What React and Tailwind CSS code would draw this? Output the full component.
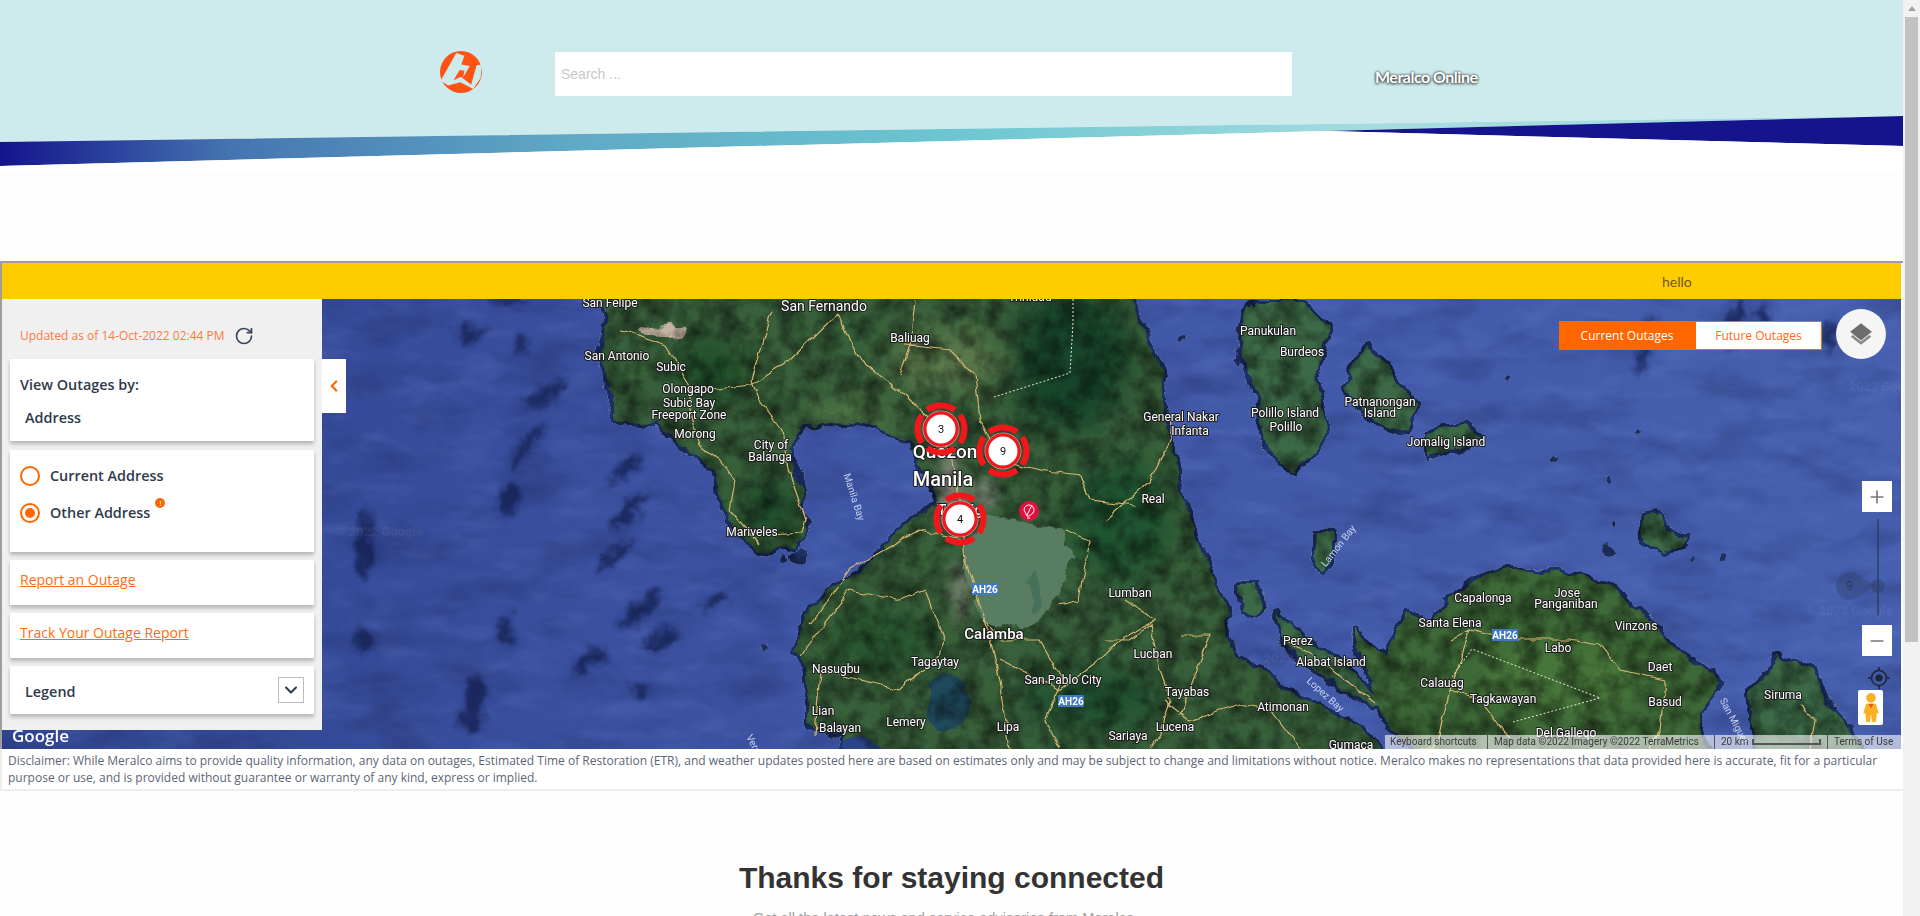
import { ChevronDown, ChevronLeft, Minus, Plus, RotateCw } from 'lucide-react';

const labels = [
  ['San Felipe', 610, 303, 12], ['San Fernando', 824, 306, 14], ['San Antonio', 617, 356, 12], ['Subic', 671, 367, 12],
  ['Olongapo', 688, 389, 12], ['Subic Bay', 689, 403, 12], ['Freeport Zone', 689, 415, 12], ['Morong', 695, 434, 12],
  ['City of', 771, 445, 12], ['Balanga', 770, 457, 12], ['Mariveles', 752, 532, 12], ['Baliuag', 910, 338, 12],
  ['Quezon', 945, 451, 19], ['Manila', 943, 479, 20], ['Taguig', 960, 510, 15], ['Nasugbu', 836, 669, 12],
  ['Tagaytay', 935, 662, 12], ['Calamba', 994, 634, 15], ['San Pablo City', 1063, 680, 12], ['Lian', 823, 711, 12],
  ['Balayan', 840, 728, 12], ['Lemery', 906, 722, 12], ['Lipa', 1008, 727, 12], ['Trinidad', 1030, 297, 12],
  ['General Nakar', 1181, 417, 12], ['Infanta', 1190, 431, 12], ['Panukulan', 1268, 331, 12], ['Burdeos', 1302, 352, 12],
  ['Polillo Island', 1285, 413, 12], ['Polillo', 1286, 427, 12], ['Patnanongan', 1380, 402, 12], ['Island', 1380, 413, 12],
  ['Jomalig Island', 1446, 442, 12], ['Real', 1153, 499, 12], ['Lumban', 1130, 593, 12], ['Lucban', 1153, 654, 12],
  ['Tayabas', 1187, 692, 12], ['Lucena', 1175, 727, 12], ['Sariaya', 1128, 736, 12], ['Atimonan', 1283, 707, 12],
  ['Gumaca', 1351, 745, 12], ['Perez', 1298, 641, 12], ['Alabat Island', 1331, 662, 12], ['Capalonga', 1483, 598, 12],
  ['Jose', 1567, 593, 12], ['Panganiban', 1566, 604, 12], ['Santa Elena', 1450, 623, 12], ['Vinzons', 1636, 626, 12],
  ['Labo', 1558, 648, 12], ['Daet', 1660, 667, 12], ['Calauag', 1442, 683, 12], ['Tagkawayan', 1503, 699, 12],
  ['Basud', 1665, 702, 12], ['Del Gallego', 1566, 733, 12], ['Siruma', 1783, 695, 12],
];

const waterLabels = [
  ['Manila Bay', 851, 498, 72], ['Lamon Bay', 1341, 548, -52], ['Lopez Bay', 1323, 697, 42], ['San Miguel', 1731, 722, 62], ['Verde', 752, 748, 62],
];

const shields = [[985, 589], [1071, 701], [1505, 635]];

// [cx, cy, rx, ry, rotation]
const clouds = [
  [545, 395, 26, 7, -25], [530, 440, 24, 5, -50], [520, 455, 18, 5, -50], [625, 470, 18, 7, -40], [630, 510, 26, 8, -50],
  [615, 555, 24, 6, -45], [640, 610, 26, 8, -40], [365, 545, 8, 34, 0], [365, 640, 12, 12, 0], [510, 500, 10, 16, 20],
  [505, 630, 8, 14, 10], [475, 695, 10, 20, 5], [590, 660, 20, 8, -30], [660, 640, 20, 8, -25], [715, 600, 16, 6, -30],
  [640, 690, 10, 6, 0], [1735, 325, 8, 28, 15], [1645, 345, 6, 30, 10], [1760, 320, 8, 16, 25], [1830, 335, 5, 16, 0],
  [470, 335, 14, 8, -20], [510, 300, 18, 5, 0], [520, 345, 6, 10, 0], [470, 720, 14, 10, 0],
];

const roads = [
  'M772 310 L751 380 L760 400 L782 430 L788 470 L806 520 L802 533 L770 535',
  'M836 315 L790 360 L750 385 L710 390',
  'M836 315 L860 360 L905 395 L930 420 L950 450 L960 500 L965 560 L985 620 L1000 680 L1010 749',
  'M915 300 L910 345 L900 375 M905 345 L950 350 L975 375 L980 420 L1000 460 L1040 470 L1080 475 L1090 500 L1135 505',
  'M620 330 L640 335 L665 345 L690 385 L690 410 L700 445 L720 460 L735 480 L730 510 L760 545',
  'M810 625 L850 570 L920 530 L965 540',
  'M800 655 L850 590 L900 600 L925 590 L945 640 L935 660 L900 690 L860 680 L820 670 L815 735',
  'M985 620 L1000 640 L1040 640 L1063 680 L1045 720 L1060 749',
  'M1065 530 L1090 540 L1080 600 L1060 605',
  'M1000 660 L1060 690 L1100 660 L1120 640 L1155 620 L1125 600',
  'M1105 520 L1150 480 L1170 440 L1172 420',
  'M1105 640 L1130 640 L1150 625 L1160 670 L1170 700 L1160 735 L1150 749',
  'M1165 700 L1190 720 L1240 705 L1270 710 L1300 749',
  'M1180 635 L1210 635 L1180 715',
  'M1285 640 L1320 660 L1375 703',
  'M1450 640 L1470 630 L1510 640 L1570 640 L1600 645 L1620 670 L1665 680 L1660 730 L1650 749',
  'M1470 630 L1450 690 L1435 749 L1420 749',
  'M1450 690 L1480 700 L1510 740',
  'M1800 705 L1815 720 L1810 749',
];

const markers = [[941, 429, '3'], [1003, 451, '9'], [960, 519, '4']];

const MAIN_LAND =
  'M601 299 L606 323 L601 350 L609 393 L616 420 L657 425 L688 453 L718 477 L723 507 L734 530 L759 550 L795 547 L805 523 L802 490 L790 450 L802 423 L825 423 L876 425 L912 443 L932 487 L938 507 L912 517 L897 533 L861 573 L831 590 L810 610 L792 650 L805 660 L810 690 L810 723 L841 737 L846 755 L1386 755 L1365 727 L1304 700 L1248 660 L1222 637 L1228 610 L1202 553 L1182 497 L1171 447 L1161 373 L1131 295 L601 295 Z';
const BICOL =
  'M1355 630 L1386 657 L1406 610 L1432 623 L1447 600 L1488 570 L1539 570 L1590 577 L1641 610 L1677 650 L1722 683 L1697 717 L1712 755 L1416 755 L1381 717 L1370 677 L1355 643 Z';
const islands = [
  'M1248 303 L1304 303 L1330 327 L1314 377 L1330 430 L1294 473 L1268 450 L1253 383 L1238 353 Z',
  'M1365 343 L1391 377 L1416 403 L1406 433 L1365 417 L1345 390 Z',
  'M1427 433 L1467 423 L1483 443 L1427 455 Z',
  'M1276 612 L1304 637 L1355 673 L1381 703 L1370 707 L1324 677 L1284 643 Z',
  'M1779 653 L1814 673 L1824 700 L1845 723 L1865 755 L1758 755 L1748 693 L1768 673 Z',
  'M1640 515 L1660 512 L1668 530 L1686 540 L1665 555 L1640 535 Z',
  'M1318 532 L1330 532 L1332 560 L1322 572 L1316 556 Z',
  'M1240 585 L1260 585 L1262 610 L1244 612 Z',
];

// Satellite map base: land, shadows, roads and place names
const MapCanvas = () => (
  <svg viewBox="2 299 1899 450" className="block h-[450px] w-[1899px] font-['Roboto']">
    <defs>
      <linearGradient id="sea" x1="0" x2="1" y1="0" y2="0">
        <stop offset="0" stopColor="#2f438f" />
        <stop offset="0.45" stopColor="#3f55a5" />
        <stop offset="1" stopColor="#465fae" />
      </linearGradient>
      <filter id="b6" colorInterpolationFilters="sRGB"><feGaussianBlur stdDeviation="7" /></filter>
      <filter id="b12" colorInterpolationFilters="sRGB"><feGaussianBlur stdDeviation="14" /></filter>
      <filter id="seaNoise" filterUnits="userSpaceOnUse" x="2" y="299" width="1899" height="450" colorInterpolationFilters="sRGB">
        <feTurbulence type="fractalNoise" baseFrequency="0.014 0.03" numOctaves="4" seed="8" />
        <feColorMatrix values="0 0 0 0 0.1  0 0 0 0 0.14  0 0 0 0 0.34  2.2 0 0 0 -1.05" />
      </filter>
      <filter id="seaLight" filterUnits="userSpaceOnUse" x="2" y="299" width="1899" height="450" colorInterpolationFilters="sRGB">
        <feTurbulence type="fractalNoise" baseFrequency="0.02 0.05" numOctaves="3" seed="21" />
        <feColorMatrix values="0 0 0 0 0.5  0 0 0 0 0.6  0 0 0 0 0.9  1.8 0 0 0 -0.85" />
      </filter>
      <filter id="cloud" filterUnits="userSpaceOnUse" x="2" y="299" width="1899" height="450" colorInterpolationFilters="sRGB">
        <feTurbulence type="fractalNoise" baseFrequency="0.06" numOctaves="3" seed="5" result="n" />
        <feGaussianBlur in="SourceGraphic" stdDeviation="3.5" result="g" />
        <feDisplacementMap in="g" in2="n" scale="18" xChannelSelector="R" yChannelSelector="G" />
      </filter>
      <filter id="terrain" filterUnits="userSpaceOnUse" x="2" y="299" width="1899" height="450" colorInterpolationFilters="sRGB">
        <feTurbulence type="fractalNoise" baseFrequency="0.04" numOctaves="4" seed="3" result="d" />
        <feDisplacementMap in="SourceGraphic" in2="d" scale="16" xChannelSelector="R" yChannelSelector="G" result="land" />
        <feTurbulence type="fractalNoise" baseFrequency="0.05" numOctaves="5" seed="12" />
        <feColorMatrix values="1.05 0 0 0 0.3  1.05 0 0 0 0.3  1.05 0 0 0 0.3  0 0 0 0 1" result="tex" />
        <feComposite in="tex" in2="land" operator="in" result="texIn" />
        <feBlend in="texIn" in2="land" mode="multiply" />
      </filter>
      <filter id="shape" filterUnits="userSpaceOnUse" x="2" y="299" width="1899" height="450">
        <feTurbulence type="fractalNoise" baseFrequency="0.04" numOctaves="4" seed="3" result="d" />
        <feDisplacementMap in="SourceGraphic" in2="d" scale="16" xChannelSelector="R" yChannelSelector="G" />
      </filter>
      <filter id="wobble" filterUnits="userSpaceOnUse" x="2" y="299" width="1899" height="450">
        <feTurbulence type="fractalNoise" baseFrequency="0.07" numOctaves="2" seed="9" result="w" />
        <feDisplacementMap in="SourceGraphic" in2="w" scale="7" xChannelSelector="R" yChannelSelector="G" />
      </filter>
      <clipPath id="land"><path d={MAIN_LAND} /><path d={BICOL} /></clipPath>
    </defs>

    <rect x="2" y="299" width="1899" height="450" fill="url(#sea)" />
    <rect x="2" y="299" width="1899" height="450" filter="url(#seaLight)" opacity="0.22" />
    <rect x="2" y="299" width="1899" height="450" filter="url(#seaNoise)" opacity="0.35" />
    <g filter="url(#cloud)" fill="#101b48" opacity="0.72">
      {clouds.map(([x, y, rx, ry, rot]) => (
        <ellipse key={`${x}-${y}`} cx={x} cy={y} rx={rx} ry={ry} transform={`rotate(${rot} ${x} ${y})`} />
      ))}
    </g>

    {/* everything in this group gets the same rough coast and ground texture */}
    <g filter="url(#terrain)">
      <g fill="#1b2f68" stroke="#1b2f68" strokeWidth="7" strokeLinejoin="round">
        <path d={MAIN_LAND} /><path d={BICOL} />
        {islands.map((d) => <path key={d} d={d} />)}
      </g>
      <path d={MAIN_LAND} fill="#38603a" />
      <path d={BICOL} fill="#3d6837" />
      {islands.map((d) => <path key={d} d={d} fill="#3c6a46" />)}
      <g clipPath="url(#land)">
        <g filter="url(#b12)">
          <ellipse cx="1070" cy="360" rx="60" ry="70" fill="#17452b" />
          <ellipse cx="710" cy="370" rx="40" ry="30" fill="#21502a" />
          <ellipse cx="770" cy="510" rx="24" ry="30" fill="#1c4a2a" />
          <ellipse cx="950" cy="360" rx="60" ry="30" fill="#5b7a4c" />
          <ellipse cx="850" cy="420" rx="40" ry="20" fill="#527848" />
          <ellipse cx="880" cy="640" rx="50" ry="30" fill="#27562e" />
          <ellipse cx="1090" cy="700" rx="70" ry="30" fill="#205230" />
          <ellipse cx="1120" cy="520" rx="50" ry="60" fill="#1f5430" />
          <ellipse cx="1560" cy="680" rx="80" ry="40" fill="#47763a" />
        </g>
        <g filter="url(#b6)">
          <ellipse cx="950" cy="490" rx="14" ry="40" fill="#7d8276" />
          <ellipse cx="985" cy="495" rx="14" ry="14" fill="#7c8678" />
          <ellipse cx="960" cy="590" rx="10" ry="30" fill="#6f7d68" />
        </g>
      </g>
      <ellipse cx="665" cy="330" rx="24" ry="5" fill="#c4b3a0" />
      <ellipse cx="948" cy="702" rx="20" ry="28" fill="#1f4a5c" />
      <ellipse cx="861" cy="750" rx="20" ry="12" fill="#2a4688" />
      <g fill="#1f3268">
        <circle cx="1509" cy="380" r="3" /><circle cx="1640" cy="432" r="3" /><circle cx="1554" cy="462" r="3" />
        <circle cx="1608" cy="479" r="3" /><circle cx="1616" cy="523" r="3" /><circle cx="1608" cy="552" r="6" />
        <circle cx="1725" cy="561" r="4" /><circle cx="1693" cy="561" r="3" /><circle cx="1181" cy="340" r="3" />
        <circle cx="785" cy="560" r="4" /><circle cx="800" cy="558" r="9" /><circle cx="763" cy="650" r="3" />
      </g>
    </g>

    {/* Laguna de Bay sits smooth on top of the noise */}
    <g filter="url(#shape)">
      <path
        d="M968 540 L984 517 L1024 523 L1065 530 L1073 557 L1060 593 L1024 630 L984 623 L968 583 L963 557 Z"
        fill="#587d63"
      />
      <ellipse cx="1034" cy="590" rx="5" ry="22" fill="#47705a" />
    </g>

    <path
      d={roads.join(' ')}
      fill="none"
      stroke="#d5b46f"
      strokeWidth="1.2"
      strokeLinejoin="round"
      filter="url(#wobble)"
    />
    <path
      d="M1073 299 L1073 323 L1070 373 L994 397 M1452 677 L1472 649 L1600 698 L1513 722"
      fill="none"
      stroke="#e6e6d8"
      strokeWidth="1"
      strokeDasharray="2 2"
    />

    {waterLabels.map(([name, x, y, rot]) => (
      <text
        key={name}
        x={x}
        y={y}
        transform={`rotate(${rot} ${x} ${y})`}
        textAnchor="middle"
        fontSize="10"
        fill="#c6d2ee"
      >
        {name}
      </text>
    ))}

    <g fill="#fff" opacity="0.05" fontSize="13" fontWeight="700">
      <text x="1835" y="391">© 2022 Google</text>
      <text x="1805" y="615">© 2022 Google</text>
      <text x="1250" y="663">© 2022 Google</text>
      <text x="335" y="536">© 2022 Google</text>
    </g>

    {labels.map(([name, x, y, size]) => (
      <text
        key={name}
        x={x}
        y={y + size * 0.36}
        textAnchor="middle"
        fontSize={size}
        fontWeight={size > 14 ? 500 : 400}
        fill="#fff"
        stroke="#1c1c1c"
        strokeWidth="2"
        paintOrder="stroke"
        strokeLinejoin="round"
      >
        {name}
      </text>
    ))}
    {shields.map(([x, y]) => (
      <g key={x}>
        <rect x={x - 13} y={y - 6} width="26" height="12" rx="1" fill="#3f78c4" />
        <text x={x} y={y + 3.5} textAnchor="middle" fontSize="10" fontWeight="700" fill="#fff">AH26</text>
      </g>
    ))}

    {markers.map(([x, y, n]) => (
      <g key={n}>
        <circle
          cx={x}
          cy={y}
          r="23.5"
          fill="none"
          stroke="#f5161c"
          strokeWidth="6"
          pathLength="100"
          strokeDasharray="20 5"
          strokeDashoffset="10"
          transform={`rotate(-90 ${x} ${y})`}
        />
        <circle cx={x} cy={y} r="18" fill="none" stroke="#f7858a" strokeWidth="1" />
        <circle cx={x} cy={y} r="16" fill="#fff" stroke="#f5161c" strokeWidth="3" />
        <text x={x} y={y + 4} textAnchor="middle" fontSize="11" fill="#111">{n}</text>
      </g>
    ))}
    <circle cx="1029" cy="511" r="10" fill="#e1103f" />
    <path d="M1024 510 a5 5 0 1 1 9 3 l-4 3 h-2 z M1032 505 L1027 515 M1027 518 h3" fill="none" stroke="#fff" strokeWidth="1" />
    <text x="12" y="742" fontSize="17" fontWeight="600" fill="#fff" className="font-['Open_Sans']">Google</text>
  </svg>
);

const Sidebar = () => (
  <aside className="absolute left-0 top-0 h-[431px] w-[320px] bg-[#f0f0f0] px-2 font-['Open_Sans'] text-[14.4px] font-semibold text-[#2f3a4a]">
    <div className="flex h-[60px] items-center pl-[10px] pt-[14px]">
      <span className="text-xs font-normal text-[#ff7a3c]">Updated as of 14-Oct-2022 02:44 PM</span>
      <RotateCw className="ml-[9px] h-[20px] w-[20px] text-[#3c4858]" strokeWidth={2} />
    </div>
    <div className="h-[82px] bg-white pl-[10px] pt-[16px] shadow-[0_3px_4px_rgba(0,0,0,0.25)]">
      <p className="leading-[20px]">View Outages by:</p>
      <p className="mt-[13px] pl-[5px] leading-[20px]">Address</p>
    </div>
    <div className="mt-[9px] h-[102px] bg-white pl-[10px] pt-[15px] shadow-[0_3px_4px_rgba(0,0,0,0.25)]">
      <div className="flex items-center gap-[10px] leading-[20px]">
        <span className="h-5 w-5 rounded-full border-2 border-[#ff6600]" />
        <span className="pt-px">Current Address</span>
      </div>
      <div className="mt-[16px] flex items-center gap-[10px] leading-[20px]">
        <span className="flex h-5 w-5 items-center justify-center rounded-full border-2 border-[#ff6600]">
          <span className="h-[10px] w-[10px] rounded-full bg-[#ff6600]" />
        </span>
        <span className="relative pt-px">
          Other Address
          <span className="absolute right-[-15px] top-[-4px] flex h-[10px] w-[10px] items-center justify-center rounded-full bg-[#ff6600] text-[7px] leading-none text-white">!</span>
        </span>
      </div>
    </div>
    <div className="mt-2 h-[45px] bg-white pl-[10px] pt-[10px] text-sm font-normal leading-[20px] text-[#ff6a13] underline shadow-[0_3px_4px_rgba(0,0,0,0.25)]">
      Report an Outage
    </div>
    <div className="mt-2 h-[45px] bg-white pl-[10px] pt-[10px] text-sm font-normal leading-[20px] text-[#ff6a13] underline shadow-[0_3px_4px_rgba(0,0,0,0.25)]">
      Track Your Outage Report
    </div>
    <div className="mt-2 flex h-[48px] items-center justify-between bg-white pl-[15px] pr-[10px] shadow-[0_3px_4px_rgba(0,0,0,0.25)]">
      <span className="pt-[3px]">Legend</span>
      <span className="flex h-[26px] w-[26px] items-center justify-center border border-[#bbb]">
        <ChevronDown className="h-5 w-5 text-[#2f3a4a]" strokeWidth={2.5} />
      </span>
    </div>
  </aside>
);

const MapControls = () => (
  <>
    <div className="absolute left-[320px] top-[60px] flex h-[54px] w-[24px] items-center justify-center bg-white">
      <ChevronLeft className="h-[18px] w-[18px] text-[#ff6600]" strokeWidth={3} />
    </div>

    <div className="absolute left-[1557px] top-[22px] flex h-[29px] font-['Open_Sans'] text-xs">
      <span className="flex w-[136px] items-center justify-center bg-[#ff6600] text-white">Current Outages</span>
      <span className="flex w-[127px] items-center justify-center border border-[#ff6600] bg-white text-[#ff6a13]">Future Outages</span>
    </div>

    <div className="absolute left-[1834px] top-[10px] flex h-[50px] w-[50px] items-center justify-center rounded-full bg-[#f5f5f5]">
      <svg viewBox="0 0 24 24" className="h-[26px] w-[26px]">
        <path d="M12 2 L22 10 L12 18 L2 10 Z" fill="#6d6d6d" />
        <path d="M2.5 14.5 L12 22 L21.5 14.5 L19.5 13 L12 19 L4.5 13 Z" fill="#8a8a8a" />
      </svg>
    </div>

    <div className="absolute left-[1860px] top-[182px] flex h-[31px] w-[30px] items-center justify-center bg-white">
      <Plus className="h-5 w-5 text-[#777]" strokeWidth={2} />
    </div>
    <div className="absolute left-[1875px] top-[220px] h-[96px] w-[2px] bg-[#2d3a5e]/70" />
    <div className="absolute left-[1869px] top-[280px] h-[14px] w-[14px] rounded-full bg-[#2d3a5e]/40" />
    <svg viewBox="0 0 42 28" className="absolute left-[1834px] top-[273px] h-[28px] w-[42px]">
      <path d="M14 0 a14 14 0 1 0 0 28 c8 0 14 -9 26 -14 c-12 -5 -18 -14 -26 -14 z" fill="#2d3a5e" opacity="0.32" />
    </svg>
    <span className="absolute left-[1844px] top-[279px] text-xs leading-4 text-[#2d3a5e]">9</span>
    <div className="absolute left-[1860px] top-[326px] flex h-[31px] w-[30px] items-center justify-center bg-white">
      <Minus className="h-5 w-5 text-[#777]" strokeWidth={2} />
    </div>

    <svg viewBox="0 0 22 22" className="absolute left-[1866px] top-[368px] h-[22px] w-[22px] text-[#1d2433]">
      <circle cx="11" cy="11" r="7.5" fill="none" stroke="currentColor" strokeWidth="1.5" />
      <circle cx="11" cy="11" r="3.5" fill="currentColor" />
      <path d="M11 0 V4 M11 18 V22 M0 11 H4 M18 11 H22" stroke="currentColor" strokeWidth="1.5" />
    </svg>

    <div className="absolute left-[1856px] top-[391px] flex h-[35px] w-[25px] items-center justify-center rounded-[2px] bg-white">
      <svg viewBox="0 0 20 32" className="h-[31px] w-[20px]">
        <circle cx="10" cy="6" r="5" fill="#fbb125" />
        <path d="M5 12 H15 L18 22 H16 L15 31 H11 L10 23 L9 31 H5 L4 22 H2 Z" fill="#fbb125" />
        <path d="M7 12 H13 L10 17 Z" fill="#e0621f" />
      </svg>
    </div>

    <div className="absolute bottom-0 right-0 flex h-[14px] w-[516px] items-center bg-white/60 font-['Roboto'] text-[10px] leading-none text-[#3c3c3c]">
      <span className="w-[102px] pl-[5px]">Keyboard shortcuts</span>
      <span className="h-full w-[227px] border-l border-[#555] pl-[6px]">
        <span className="flex h-full items-center">Map data ©2022 Imagery ©2022 TerraMetrics</span>
      </span>
      <span className="flex h-full w-[113px] items-center border-l border-[#555] pl-[6px]">
        20 km
        <span className="ml-[3px] h-[6px] w-[69px] border-x-2 border-b-2 border-[#555]" />
      </span>
      <span className="flex h-full flex-1 items-center border-l border-[#555] pl-[6px]">Terms of Use</span>
    </div>
  </>
);

const Scrollbar = () => (
  <div className="w-[17px] shrink-0 bg-[#f1f1f1]">
    <div className="flex h-[17px] items-center justify-center">
      <span className="h-0 w-0 border-x-[4px] border-b-[5px] border-x-transparent border-b-[#a3a3a3]" />
    </div>
    <div className="mx-[2px] h-[625px] bg-[#c1c1c1]" />
  </div>
);

const App = () => {
  return (
    <div className="flex h-[916px] w-[1920px] overflow-hidden bg-[#fdfdfd]">
      <main className="w-[1903px] shrink-0">
        {/* HEADER */}
        <header className="relative h-[261px]">
          <svg viewBox="0 0 1903 170" className="absolute left-0 top-0 h-[170px] w-[1903px]">
            <defs>
              <linearGradient id="band" x1="0" x2="1" y1="0" y2="0">
                <stop offset="0" stopColor="#14148c" />
                <stop offset="0.12" stopColor="#4574b0" />
                <stop offset="0.3" stopColor="#5fa9c6" />
                <stop offset="0.5" stopColor="#6cc6d0" />
                <stop offset="0.72" stopColor="#a4dce0" />
              </linearGradient>
            </defs>
            <path d="M0 0 H1903 V116 L0 142 Z" fill="#cdebed" />
            <path d="M0 142 L1903 116 L1327 131 L0 166 Z" fill="url(#band)" />
            <path d="M1327 131 L1903 116 V146 Z" fill="#14148c" />
            <path d="M0 166 L1327 131 L1903 146 V170 H0 Z" fill="#ffffff" />
          </svg>
          <div className="relative flex items-start pl-[440px] pt-[51px]">
            <svg viewBox="0 0 124 124" className="h-[42px] w-[42px]">
              <circle cx="62" cy="62" r="62" fill="#ff5314" />
              <path d="M48 6 L72 14 L63 40 L88 44 L68 78 L72 58 L58 56 L40 86 L62 76 L92 100 L108 42 L124 40 L120 80 L98 112 L60 92 L24 102 L2 88 Z" fill="#cdebed" />
            </svg>
            <input
              placeholder="Search ..."
              className="ml-[73px] mt-px h-[44px] w-[737px] bg-white px-[6px] font-['Liberation_Sans'] text-sm placeholder:text-[#c8c8c8]"
            />
            <span className="ml-[83px] mt-[14px] font-['Lato'] text-base font-bold tracking-[-0.5px] text-white [text-shadow:0_0_3px_#222,0_1px_3px_#444]">
              Meralco Online
            </span>
          </div>
        </header>

        {/* MAP */}
        <section className="border-l-2 border-t-2 border-[#9e9e9e]">
          <div className="flex h-[36px] w-[1899px] items-center bg-[#ffcc00] pl-[1660px] pt-[2px] font-['Lato'] text-sm text-[#6e5b14]">
            hello
          </div>
          <div className="relative h-[450px] w-[1899px] overflow-hidden">
            <MapCanvas />
            <Sidebar />
            <MapControls />
          </div>
        </section>

        <p className="h-[42px] border-b-2 border-l-2 border-[#eeeeee] bg-white pl-[6px] pt-[3px] font-['Open_Sans'] text-xs leading-[17px] text-[#5c6675]">
          Disclaimer: While Meralco aims to provide quality information, any data on outages, Estimated Time of Restoration (ETR), and weather updates posted here are based on estimates only and may be subject to change and limitations without notice. Meralco makes no representations that data provided here is accurate, fit for a particular purpose or use, and is provided without guarantee or warranty of any kind, express or implied.
        </p>

        {/* FOOTER BLURB */}
        <div className="pt-[67px] text-center font-['Liberation_Sans']">
          <h2 className="text-[30px] font-bold leading-[40px] text-[#333]">Thanks for staying connected</h2>
          <p className="mt-[8px] pr-4 text-[14.6px] leading-[24px] text-[#a0a0a0]">Get all the latest news and service advisories from Meralco</p>
        </div>
      </main>
      <Scrollbar />
    </div>
  );
};

export default App;
